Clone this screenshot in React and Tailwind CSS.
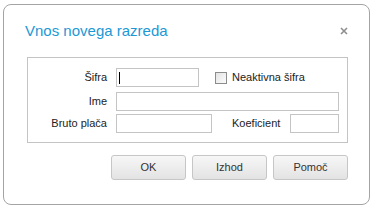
// Dialog - "Vnos novega razreda" form
function Field({ label, width }) {
  return (
    <div className="flex items-center">
      <div className="w-[79px] text-right">{label}</div>
      <div className={`ml-[9px] h-[19px] border border-[#c4c4c4] bg-white ${width}`} />
    </div>
  );
}

function Button({ children }) {
  return (
    <button className="w-[75px] h-[25px] rounded-[3px] border border-[#c6c6c6] bg-gradient-to-b from-[#f7f7f7] to-[#e3e3e3] text-[11px] font-normal text-[#333]">
      {children}
    </button>
  );
}

export default function App() {
  return (
    <div className="w-[371px] h-[210px] bg-white pt-[4px] pl-[3px] text-[11px] text-[#222]" style={{ fontFamily: '"Liberation Sans", Arial, sans-serif' }}>
      <div className="w-[367px] h-[201px] border border-[#a4a4a4] rounded-[8px] flex flex-col">
        <div className="mt-[16px] flex items-center justify-between pl-[21px] pr-[21px]">
          <span className="text-[15px] leading-[19px] text-[#1c98d6]">Vnos novega razreda</span>
          <svg width="8" height="8" viewBox="0 0 8 8" className="text-[#8e8e8e]">
            <path d="M1 1L7 7M7 1L1 7" stroke="currentColor" strokeWidth="1.6" />
          </svg>
        </div>

        <div className="ml-[23px] mt-[17px] w-[321px] h-[86px] border border-[#c4c4c4] flex flex-col">
          <div className="mt-[10px] flex items-center">
            <div className="w-[79px] text-right">Šifra</div>
            <div className="ml-[9px] w-[83px] h-[19px] border border-[#c4c4c4] bg-white flex items-center pl-[2px]">
              <div className="w-[1px] h-[12px] bg-black" />
            </div>
            <div className="ml-[16px] w-[12px] h-[12px] border border-[#8c8c8c] bg-gradient-to-br from-[#e4e4e4] to-[#fbfbfb]" />
            <span className="ml-[5px]">Neaktivna šifra</span>
          </div>
          <div className="mt-[5px]">
            <Field label="Ime" width="w-[223px]" />
          </div>
          <div className="mt-[3px] flex items-center">
            <Field label="Bruto plača" width="w-[96px]" />
            <span className="ml-[20px] w-[48px] whitespace-nowrap">Koeficient</span>
            <div className="ml-[10px] w-[49px] h-[19px] border border-[#c4c4c4] bg-white" />
          </div>
        </div>

        <div className="mt-[12px] flex justify-end gap-[6px] pr-[21px]">
          <Button>OK</Button>
          <Button>Izhod</Button>
          <Button>Pomoč</Button>
        </div>
      </div>
    </div>
  );
}
